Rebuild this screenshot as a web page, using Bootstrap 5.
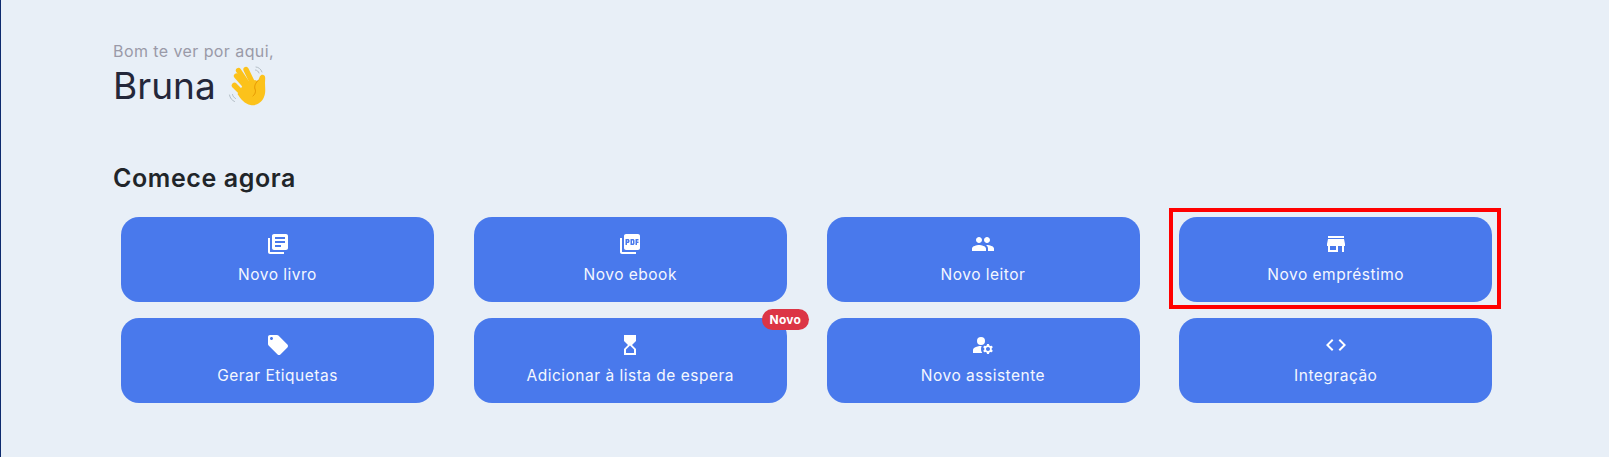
<!doctype html>
<html lang="pt-BR">
<head>
<meta charset="utf-8">
<title>Início</title>
<link href="https://cdn.jsdelivr.net/npm/bootstrap@5.3.0/dist/css/bootstrap.min.css" rel="stylesheet">
<style>
html,body{height:100%;overflow:hidden}
body{background:#e8eff7;font-family:Inter,"Noto Sans",sans-serif;color:#212529}
.page-wrap{border-left:1px solid #0d2a6e;min-height:100%;padding:42px 0 0 112px}
.hello{font-size:16px;line-height:18px;color:#9a9aa8;letter-spacing:.42px}
.who{font-size:37px;line-height:46px;font-weight:400;color:#24273a;margin:3px 0 0;display:flex;align-items:center;gap:12px}
.who svg{width:40px;height:40px;flex:none}
.start{font-size:25px;line-height:30px;font-weight:600;color:#212529;margin:54px 0 0;letter-spacing:.6px}
.tiles{margin-left:8px;width:1371.25px}
.tiles>.row{--bs-gutter-x:39.75px;--bs-gutter-y:16px;margin-top:-8px}
.tile{position:relative;display:flex;flex-direction:column;align-items:center;height:85px;padding:15px 0 0;
 border:0;border-radius:18px;background:#4979ec;color:#f4f7ff;font-size:15.5px;line-height:22px;font-weight:400;letter-spacing:.5px}
.tile:hover,.tile:active{background:#4979ec;color:#fff}
.tile svg{width:24px;height:24px;fill:#fff;margin-bottom:8px;flex:none}
.tile .tag-new{position:absolute;top:-9px;right:-22px;width:47px;height:21px;font-size:12px;line-height:21px;padding:0;font-weight:700;letter-spacing:.2px;background:#dc3545;color:#fff}
.mark-box{position:relative}
.mark-box::after{content:"";position:absolute;left:10px;right:11px;top:-9px;bottom:-7px;border:4px solid #f00;pointer-events:none}
</style>
</head>
<body>
<main class="page-wrap">
  <p class="hello mb-0">Bom te ver por aqui,</p>
  <h1 class="who">Bruna
    <svg viewBox="0 0 40 40" role="img" aria-label="mão acenando">
      <g fill="none" stroke="#b4bec6" stroke-width="1" stroke-linecap="round">
        <path d="M1.500 29c.6 3 2.200 5.200 5 6.500"/><path d="M4.500 28.500c.4 1.800 1.400 3.100 3 4"/>
        <path d="M28 1c2.500.2 5 2 6 5"/><path d="M27.500 4c1.600.2 2.900 1.300 3.500 3"/>
      </g>
      <g stroke="#fcc21b" stroke-linecap="round" fill="none">
        <path d="M6.500 19.500 15 28" stroke-width="5.500"/>
        <path d="M5.500 11 17 24" stroke-width="5.300" transform="translate(3 -1)"/>
        <path d="M10.500 4.500 21 20" stroke-width="5.300"/>
        <path d="M18 3.500 25 18" stroke-width="5.300"/>
      </g>
      <path fill="#fcc21b" d="M15 19l12-5c1.500 1 2.500 1.200 3.500 0 1-3 2-6 5-5 2.500 1 1.500 4.500 1.500 8 0 5 1 9-1 14-2.500 6-8 9-13.500 8-5.500-1-10-6-13-11z"/>
      <path fill="none" stroke="#e59600" stroke-width="1" stroke-linecap="round" d="M30.500 14c-3 3-4.500 6-3.500 9 1 2 .5 5-2 7"/>
    </svg>
  </h1>
  <h2 class="start">Comece agora</h2>
  <div class="tiles mt-3">
    <div class="row">
      <div class="col-3"><button type="button" class="btn tile w-100"><svg viewBox="0 0 24 24"><path d="M4 6H2v14c0 1.100.9 2 2 2h14v-2H4V6zm16-4H8c-1.100 0-2 .9-2 2v12c0 1.100.9 2 2 2h12c1.100 0 2-.9 2-2V4c0-1.100-.9-2-2-2zm-1 9H9V9h10v2zm-4 4H9v-2h6v2zm4-8H9V5h10v2z"/></svg>Novo livro</button></div>
      <div class="col-3"><button type="button" class="btn tile w-100"><svg viewBox="0 0 24 24"><path d="M20 2H8c-1.100 0-2 .9-2 2v12c0 1.100.9 2 2 2h12c1.100 0 2-.9 2-2V4c0-1.100-.9-2-2-2zm-8.500 7.500c0 .83-.67 1.500-1.500 1.500H9v2H7.500V7H10c.83 0 1.500.67 1.500 1.500v1zm5 2c0 .83-.67 1.500-1.500 1.500h-2.500V7H15c.83 0 1.500.67 1.500 1.500v3zm4-3H19v1h1.500V11H19v2h-1.500V7h3v1.500zM9 9.500h1v-1H9v1zM4 6H2v14c0 1.100.9 2 2 2h14v-2H4V6zm10 5.500h1v-3h-1v3z"/></svg>Novo ebook</button></div>
      <div class="col-3"><button type="button" class="btn tile w-100"><svg viewBox="0 0 24 24"><path d="M16 11c1.660 0 2.990-1.340 2.990-3S17.660 5 16 5c-1.660 0-3 1.340-3 3s1.340 3 3 3zm-8 0c1.660 0 2.990-1.340 2.990-3S9.660 5 8 5C6.340 5 5 6.340 5 8s1.340 3 3 3zm0 2c-2.330 0-7 1.170-7 3.500V19h14v-2.500c0-2.330-4.670-3.500-7-3.500zm8 0c-.29 0-.62.02-.97.05 1.160.84 1.970 1.970 1.970 3.450V19h6v-2.500c0-2.330-4.670-3.500-7-3.500z"/></svg>Novo leitor</button></div>
      <div class="col-3 mark-box"><button type="button" class="btn tile w-100"><svg viewBox="0 0 24 24"><path d="M20 4H4v2h16V4zm1 10v-2l-1-5H4l-1 5v2h1v6h10v-6h4v6h2v-6h1zm-9 4H6v-4h6v4z"/></svg>Novo empréstimo</button></div>
      <div class="col-3"><button type="button" class="btn tile w-100"><svg viewBox="0 0 24 24"><path d="M21.410 11.580l-9-9C12.050 2.220 11.550 2 11 2H4c-1.100 0-2 .9-2 2v7c0 .55.22 1.050.59 1.420l9 9c.36.36.86.58 1.410.58.55 0 1.050-.22 1.410-.59l7-7c.37-.36.59-.86.59-1.410 0-.55-.23-1.060-.59-1.420zM5.500 7C4.670 7 4 6.330 4 5.500S4.670 4 5.500 4 7 4.670 7 5.500 6.330 7 5.500 7z"/></svg>Gerar Etiquetas</button></div>
      <div class="col-3"><button type="button" class="btn tile w-100"><span class="badge rounded-pill tag-new">Novo</span><svg viewBox="0 0 24 24"><path d="M6 2v6h.01L6 8.010 10 12l-4 4 .01.01H6V22h12v-5.990h-.01L18 16l-4-4 4-3.990-.01-.01H18V2H6zm10 14.500V20H8v-3.500l4-4 4 4z"/></svg>Adicionar à lista de espera</button></div>
      <div class="col-3"><button type="button" class="btn tile w-100"><svg viewBox="0 0 24 24"><circle cx="10" cy="8" r="4"/><path d="M10.670 13.020c-.22-.01-.44-.02-.67-.02-2.420 0-4.680.67-6.610 1.820-.88.52-1.390 1.500-1.390 2.530V20h9.260c-.79-1.130-1.260-2.510-1.260-4 0-1.070.25-2.070.67-2.980z"/><path d="M20.750 16c0-.22-.03-.42-.06-.63l1.140-1.010-1-1.730-1.450.49c-.32-.27-.68-.48-1.080-.63L18 11h-2l-.3 1.490c-.4.15-.76.36-1.080.63l-1.450-.49-1 1.730 1.140 1.010c-.03.21-.06.41-.06.63s.03.42.06.63l-1.140 1.010 1 1.730 1.450-.49c.32.27.68.48 1.080.63L16 21h2l.3-1.490c.4-.15.76-.36 1.080-.63l1.450.49 1-1.730-1.140-1.010c.03-.21.06-.41.06-.63zM17 18c-1.100 0-2-.9-2-2s.9-2 2-2 2 .9 2 2-.9 2-2 2z"/></svg>Novo assistente</button></div>
      <div class="col-3"><button type="button" class="btn tile w-100"><svg viewBox="0 0 24 24"><path d="M9.400 16.600L4.800 12l4.600-4.600L8 6l-6 6 6 6 1.400-1.400zm5.200 0l4.600-4.600-4.600-4.600L16 6l6 6-6 6-1.400-1.400z"/></svg>Integração</button></div>
    </div>
  </div>
</main>
</body>
</html>
